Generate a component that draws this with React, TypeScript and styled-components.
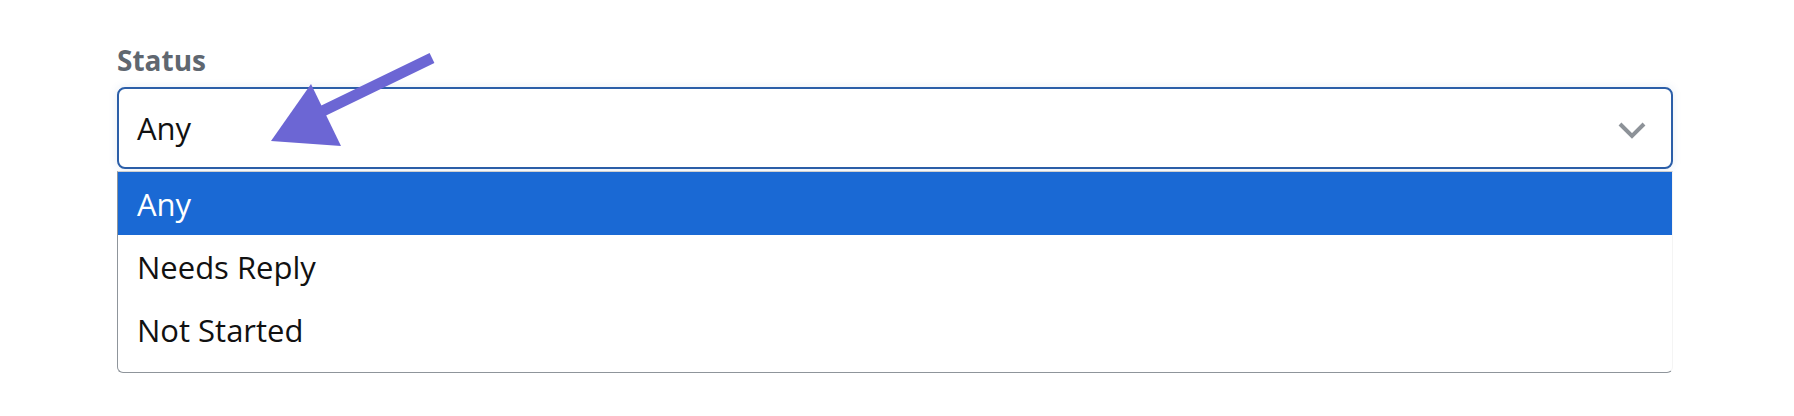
import React from "react";
import styled, { createGlobalStyle } from "styled-components";

const GlobalStyle = createGlobalStyle`
  html, body {
    margin: 0;
    padding: 0;
    background: #ffffff;
  }
  body {
    font-family: "Open Sans", "Noto Sans", sans-serif;
  }
`;

const options = ["Any", "Needs Reply", "Not Started"];

const Page = () => {
  return (
    <Canvas>
      <GlobalStyle />
      <Field>
        <Label>Status</Label>
        <SelectBox>
          <Value>Any</Value>
          <Chevron viewBox="0 0 28 17" aria-hidden="true">
            <path d="M2 2 L14 14 L26 2" />
          </Chevron>
        </SelectBox>
        <OptionList>
          {options.map((opt, i) => (
            <OptionItem key={opt} $selected={i === 0}>
              {opt}
            </OptionItem>
          ))}
        </OptionList>
      </Field>
      <Arrow viewBox="0 0 1794 416" aria-hidden="true">
        <line x1="432" y1="58" x2="300" y2="122" />
        <polygon points="311,84 271,141 341,146" />
      </Arrow>
    </Canvas>
  );
};

export default Page;

const Canvas = styled.div`
  position: relative;
  width: 1794px;
  height: 416px;
  padding: 43px 0 0 117px;
  box-sizing: border-box;
  overflow: hidden;
`;

const Field = styled.div`
  width: 1556px;
  display: flex;
  flex-direction: column;
`;

const Label = styled.label`
  font-family: "Open Sans", sans-serif;
  font-weight: 700;
  font-size: 28px;
  line-height: 35px;
  color: #5f6770;
  margin-bottom: 9px;
`;

const SelectBox = styled.div`
  height: 82px;
  box-sizing: border-box;
  border: 2px solid #2b5ea8;
  border-radius: 8px;
  display: flex;
  align-items: center;
  justify-content: space-between;
  padding: 0 25px 0 18px;
  box-shadow: 0 0 10px rgba(43, 94, 168, 0.12);
  background: #fff;
`;

const Value = styled.span`
  font-size: 31px;
  color: #111;
  line-height: 1;
`;

const Chevron = styled.svg`
  width: 28px;
  height: 17px;
  fill: none;
  stroke: #8d9298;
  stroke-width: 4;
  margin-top: 4px;
`;

const OptionList = styled.ul`
  list-style: none;
  margin: 2px 0 0;
  padding: 0 0 11px;
  border: 1px solid #8f959b;
  border-top-color: #cfcfcf;
  border-right-color: #f4f4f4;
  border-radius: 0 0 6px 6px;
  background: #fff;
`;

const OptionItem = styled.li<{ $selected?: boolean }>`
  height: 63px;
  display: flex;
  align-items: center;
  padding-left: 19px;
  font-size: 31px;
  color: ${(p) => (p.$selected ? "#ffffff" : "#111111")};
  background: ${(p) => (p.$selected ? "#1a69d4" : "transparent")};
`;

const Arrow = styled.svg`
  position: absolute;
  left: 0;
  top: 0;
  width: 1794px;
  height: 416px;
  pointer-events: none;

  line {
    stroke: #6c66d4;
    stroke-width: 11;
  }
  polygon {
    fill: #6c66d4;
  }
`;
